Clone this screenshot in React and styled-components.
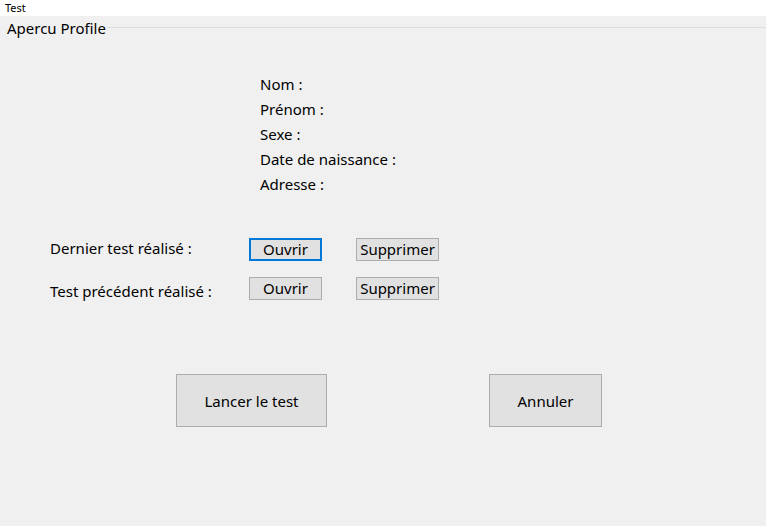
import { Fragment } from "react";
import styled, { createGlobalStyle } from "styled-components";

const GlobalStyle = createGlobalStyle`
  html, body {
    margin: 0;
    padding: 0;
    background: #f0f0f0;
    font-family: "Noto Sans", "Liberation Sans", sans-serif;
    color: #000;
  }
`;

const Window = styled.div`
  width: 766px;
  height: 526px;
  display: flex;
  flex-direction: column;
  background: #f0f0f0;
  overflow: hidden;
`;

const TitleBar = styled.div`
  height: 16px;
  background: #ffffff;
  font-size: 11px;
  line-height: 16px;
  padding-left: 5px;
`;

const GroupHeader = styled.div`
  display: flex;
  align-items: center;
  height: 24px;
  padding-left: 7px;
`;

const GroupTitle = styled.span`
  font-size: 15px;
  line-height: 24px;
  padding-right: 1px;
`;

const GroupLine = styled.div`
  flex: 1;
  height: 1px;
  background: #dcdcdc;
  margin-top: -2px;
`;

const InfoList = styled.div`
  display: flex;
  flex-direction: column;
  margin: 32px 0 0 260px;
`;

const InfoLabel = styled.div`
  font-size: 15px;
  line-height: 25px;
  height: 25px;
`;

const TestGrid = styled.div`
  display: grid;
  grid-template-columns: 199px 107px auto;
  row-gap: 16px;
  margin: 41px 0 0 50px;
  align-items: start;
`;

const RowLabel = styled.div`
  font-size: 15px;
  line-height: 23px;
  margin-top: ${(p) => p.$offset || 0}px;
`;

const SmallButton = styled.button`
  width: ${(p) => p.$w}px;
  height: 23px;
  box-sizing: border-box;
  padding: 0;
  font-family: inherit;
  font-size: 15px;
  line-height: 19px;
  color: #000;
  background: #e1e1e1;
  border: 1px solid ${(p) => (p.$focused ? "#0078d7" : "#adadad")};
  box-shadow: ${(p) => (p.$focused ? "inset 0 0 0 1px #0078d7" : "none")};
  border-radius: 0;
`;

const ActionRow = styled.div`
  display: flex;
  margin: 71px 0 0 176px;
  gap: 162px;
`;

const BigButton = styled.button`
  width: ${(p) => p.$w}px;
  height: 53px;
  box-sizing: border-box;
  padding: 0;
  font-family: inherit;
  font-size: 15px;
  color: #000;
  background: #e1e1e1;
  border: 1px solid #adadad;
  border-radius: 0;
`;

const tests = [
  { label: "Dernier test réalisé :", focused: true, offset: -1 },
  { label: "Test précédent réalisé :", focused: false, offset: 3 },
];

export default function App() {
  return (
    <Window>
      <GlobalStyle />
      <TitleBar>Test</TitleBar>
      <GroupHeader>
        <GroupTitle>Apercu Profile</GroupTitle>
        <GroupLine />
      </GroupHeader>
      <InfoList>
        <InfoLabel>Nom :</InfoLabel>
        <InfoLabel>Prénom :</InfoLabel>
        <InfoLabel>Sexe :</InfoLabel>
        <InfoLabel>Date de naissance :</InfoLabel>
        <InfoLabel>Adresse :</InfoLabel>
      </InfoList>
      <TestGrid>
        {tests.map((t) => (
          <Fragment key={t.label}>
            <RowLabel $offset={t.offset}>{t.label}</RowLabel>
            <SmallButton $w={73} $focused={t.focused}>
              Ouvrir
            </SmallButton>
            <SmallButton $w={83}>Supprimer</SmallButton>
          </Fragment>
        ))}
      </TestGrid>
      <ActionRow>
        <BigButton $w={151}>Lancer le test</BigButton>
        <BigButton $w={113}>Annuler</BigButton>
      </ActionRow>
    </Window>
  );
}
